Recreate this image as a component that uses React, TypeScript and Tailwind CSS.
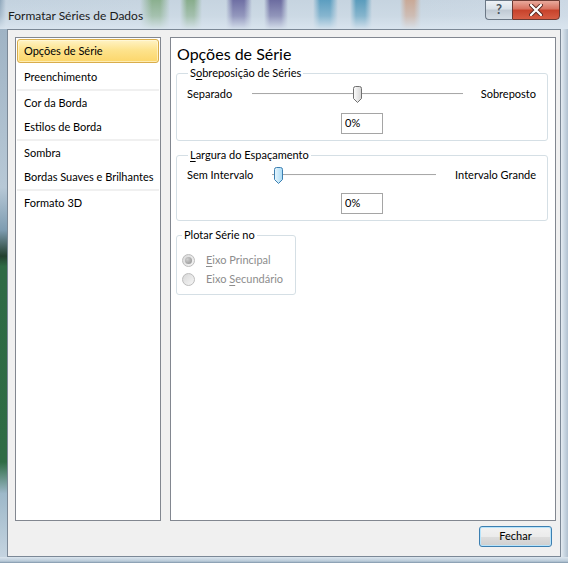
const navGroups = [
  ["Opções de Série", "Preenchimento"],
  ["Cor da Borda", "Estilos de Borda"],
  ["Sombra", "Bordas Suaves e Brilhantes"],
  ["Formato 3D"],
];

function Thumb({ blue }: { blue?: boolean }) {
  const fill = blue ? "url(#thumbBlue)" : "url(#thumbGray)";
  const stroke = blue ? "#3c7fb1" : "#707070";
  return (
    <svg width="11" height="18" viewBox="0 0 11 18">
      <defs>
        <linearGradient id="thumbGray" x1="0" x2="1" y1="0" y2="0">
          <stop offset="0" stopColor="#fdfdfd" />
          <stop offset="1" stopColor="#d4d4d4" />
        </linearGradient>
        <linearGradient id="thumbBlue" x1="0" x2="1" y1="0" y2="0">
          <stop offset="0" stopColor="#e8f6fd" />
          <stop offset="1" stopColor="#a9dbf6" />
        </linearGradient>
      </defs>
      <path
        d="M1.5 2.5 Q1.5 0.5 3.5 0.5 H7.5 Q9.5 0.5 9.5 2.5 V12.5 L5.5 16.5 L1.5 12.5 Z"
        fill={fill}
        stroke={stroke}
      />
    </svg>
  );
}

function Slider({ width, thumbAt, blue }: { width: number; thumbAt: string; blue?: boolean }) {
  return (
    <div className="relative h-[18px]" style={{ width }}>
      <div className="absolute left-0 right-0 top-[8px] h-px bg-[#a8a8a8]" />
      <div className="absolute left-0 right-0 top-[9px] h-px bg-[#fbfbfb]" />
      <div className={`absolute top-[1px] ${thumbAt}`}>
        <Thumb blue={blue} />
      </div>
    </div>
  );
}

function Radio({ checked, label, hot }: { checked?: boolean; label: string; hot: number }) {
  return (
    <div className="flex items-center h-[19px]">
      <span className="ml-[5px] w-[13px] h-[13px] rounded-full border border-[#bcbcbc] bg-[linear-gradient(135deg,#d8d8d8,#f6f6f6)] flex items-center justify-center">
        {checked && <span className="w-[7px] h-[7px] rounded-full bg-[radial-gradient(circle_at_35%_35%,#cfcfcf,#8f8f8f)]" />}
      </span>
      <span className="ml-[11px] text-[#8d8d8d]">
        {label.slice(0, hot)}
        <span className="underline underline-offset-2">{label[hot]}</span>
        {label.slice(hot + 1)}
      </span>
    </div>
  );
}

function PercentBox() {
  return (
    <div className="mx-auto w-[42px] h-[21px] border border-[#a5a5a5] bg-white flex items-center pl-[3px] text-black">
      0%
    </div>
  );
}

export default function App() {
  return (
    <div
      className="w-[568px] h-[563px] flex flex-col overflow-hidden text-[11px] text-black bg-[#cdd9e4]"
      style={{ fontFamily: "Lato, 'Noto Sans', sans-serif" }}
    >
      {/* title bar over the blurred desktop */}
      <div className="h-[29px] shrink-0 flex items-start bg-[linear-gradient(to_bottom,rgba(214,226,236,0)_0%,rgba(214,226,236,0.35)_55%,rgba(218,229,239,0.95)_100%),linear-gradient(90deg,#8fa7bb_0px,#c3d2df_6px,#c6d4e0_140px,#8bb08f_152px,#8bb08f_160px,#c6d4e0_170px,#c6d4e0_180px,#88ad8c_187px,#88ad8c_194px,#c6d4e0_202px,#c6d4e0_226px,#6f6fa4_233px,#6f6fa4_244px,#c6d4e0_252px,#c6d4e0_264px,#6c6ca0_270px,#6c6ca0_281px,#c6d4e0_288px,#c6d4e0_313px,#5c9ec0_320px,#5c9ec0_330px,#c6d4e0_338px,#c6d4e0_350px,#5a9cbc_356px,#5a9cbc_365px,#c6d4e0_372px,#c6d4e0_400px,#c9a997_406px,#c9a997_414px,#c6d4e0_421px,#ccd8e4_568px)]">
        <div className="pl-[8px] pt-[7px] text-[#1b1b1b] text-[12px]">Formatar Séries de Dados</div>
        <div className="ml-auto mr-[8px] flex h-[20px]">
          <div className="w-[27px] h-full rounded-bl-[4px] border border-r-0 border-[#6b7886] bg-[linear-gradient(to_bottom,#eef2f6_0%,#d9e1e8_45%,#bfc9d3_50%,#d5dee6_100%)] flex items-center justify-center text-[13px] font-bold text-[#4a5560]">
            ?
          </div>
          <div className="w-[48px] h-full rounded-br-[4px] border border-[#6b3a33] bg-[linear-gradient(to_bottom,#e9a99c_0%,#d7715f_45%,#c7422b_50%,#d65d44_100%)] flex items-center justify-center">
            <svg width="14" height="12" viewBox="0 0 14 12">
              <path d="M2 1 L12 11 M12 1 L2 11" stroke="#5a2a22" strokeWidth="4" strokeLinecap="round" />
              <path d="M2 1 L12 11 M12 1 L2 11" stroke="#ffffff" strokeWidth="2.2" strokeLinecap="round" />
            </svg>
          </div>
        </div>
      </div>

      <div className="flex-1 flex">
        {/* left frame edge */}
        <div className="w-[7px] shrink-0 bg-[linear-gradient(to_bottom,#9fb3c4,#b7c8d6_30%,#7f9db2_38%,#23402f_43%,#2e6a44_45%,#2f6c45_82%,#9db8c9_88%,#c5d4e0_100%)]" />

        {/* client area */}
        <div className="flex-1 border border-[#7b8896] bg-[#f0f0f0] flex flex-col pt-[7px] pl-[7px]">
          <div className="flex h-[484px]">
            {/* category list */}
            <div className="w-[146px] border border-[#828790] bg-white py-[1px] px-[1px]">
              {navGroups.map((group, gi) => (
                <div key={gi} className={gi < navGroups.length - 1 ? "border-b-2 border-[#f0f0f0]" : ""}>
                  {group.map((item, ii) => {
                    const selected = gi === 0 && ii === 0;
                    return (
                      <div
                        key={item}
                        className={
                          selected
                            ? "h-[24px] mb-[2px] flex items-center pl-[6px] rounded-[3px] border border-[#d9ad4b] bg-[linear-gradient(to_bottom,#fff3c5_0%,#fde38d_45%,#fcd66a_100%)] shadow-[inset_0_0_0_1px_rgba(255,250,225,0.6)]"
                            : "h-[24px] flex items-center pl-[7px]"
                        }
                      >
                        {item}
                      </div>
                    );
                  })}
                </div>
              ))}
            </div>

            {/* options page */}
            <div className="ml-[9px] w-[386px] border border-[#828790] bg-white pl-[5px]">
              <div className="mt-[6px] ml-[1px] h-[20px] text-[16px] leading-[20px]">Opções de Série</div>

              <fieldset className="mt-[1px] w-[372px] rounded-[3px] border border-[#d5dfe5] pl-[10px] pr-[11px] pb-[6px]">
                <legend className="ml-[1px] px-[2px] h-[16px] leading-[16px]">
                  S<span className="underline underline-offset-2">o</span>breposição de Séries
                </legend>
                <div className="mt-[4px] flex items-center h-[18px]">
                  <span className="w-[65px]">Separado</span>
                  <Slider width={211} thumbAt="left-[100px]" />
                  <span className="flex-1 text-right">Sobreposto</span>
                </div>
                <div className="mt-[10px] pl-[1px]">
                  <PercentBox />
                </div>
              </fieldset>

              <fieldset className="mt-[6px] w-[372px] rounded-[3px] border border-[#d5dfe5] pl-[10px] pr-[11px] pb-[6px]">
                <legend className="ml-[1px] px-[2px] h-[16px] leading-[16px]">
                  <span className="underline underline-offset-2">L</span>argura do Espaçamento
                </legend>
                <div className="mt-[3px] flex items-center h-[18px]">
                  <span className="w-[85px]">Sem Intervalo</span>
                  <Slider width={164} thumbAt="left-[1px]" blue />
                  <span className="flex-1 text-right">Intervalo Grande</span>
                </div>
                <div className="mt-[9px] pl-[1px]">
                  <PercentBox />
                </div>
              </fieldset>

              <fieldset className="mt-[6px] w-[120px] rounded-[3px] border border-[#d5dfe5] pb-[5px]">
                <legend className="ml-[5px] px-[2px] h-[16px] leading-[16px]">Plotar Série no</legend>
                <div className="mt-[8px]">
                  <Radio checked label="Eixo Principal" hot={0} />
                  <Radio label="Eixo Secundário" hot={5} />
                </div>
              </fieldset>
            </div>
          </div>

          <div className="flex justify-end pr-[8px] mt-[5px]">
            <button className="w-[73px] h-[21px] rounded-[3px] border border-[#3c7fb1] bg-[linear-gradient(to_bottom,#f2f2f2_0%,#ebebeb_50%,#dddddd_51%,#cfcfcf_100%)] shadow-[inset_0_0_0_1px_#b8e4fb] text-[11px] text-black">
              Fechar
            </button>
          </div>
        </div>

        {/* right frame edge */}
        <div className="w-[7px] shrink-0 bg-[linear-gradient(90deg,#e4ebf1,#c4d2de_60%,#b0c0cf)]" />
      </div>

      {/* bottom frame edge */}
      <div className="h-[6px] shrink-0 bg-[linear-gradient(to_bottom,#dbe5ee,#b9cad8_70%,#7e94a8)]" />
    </div>
  );
}
